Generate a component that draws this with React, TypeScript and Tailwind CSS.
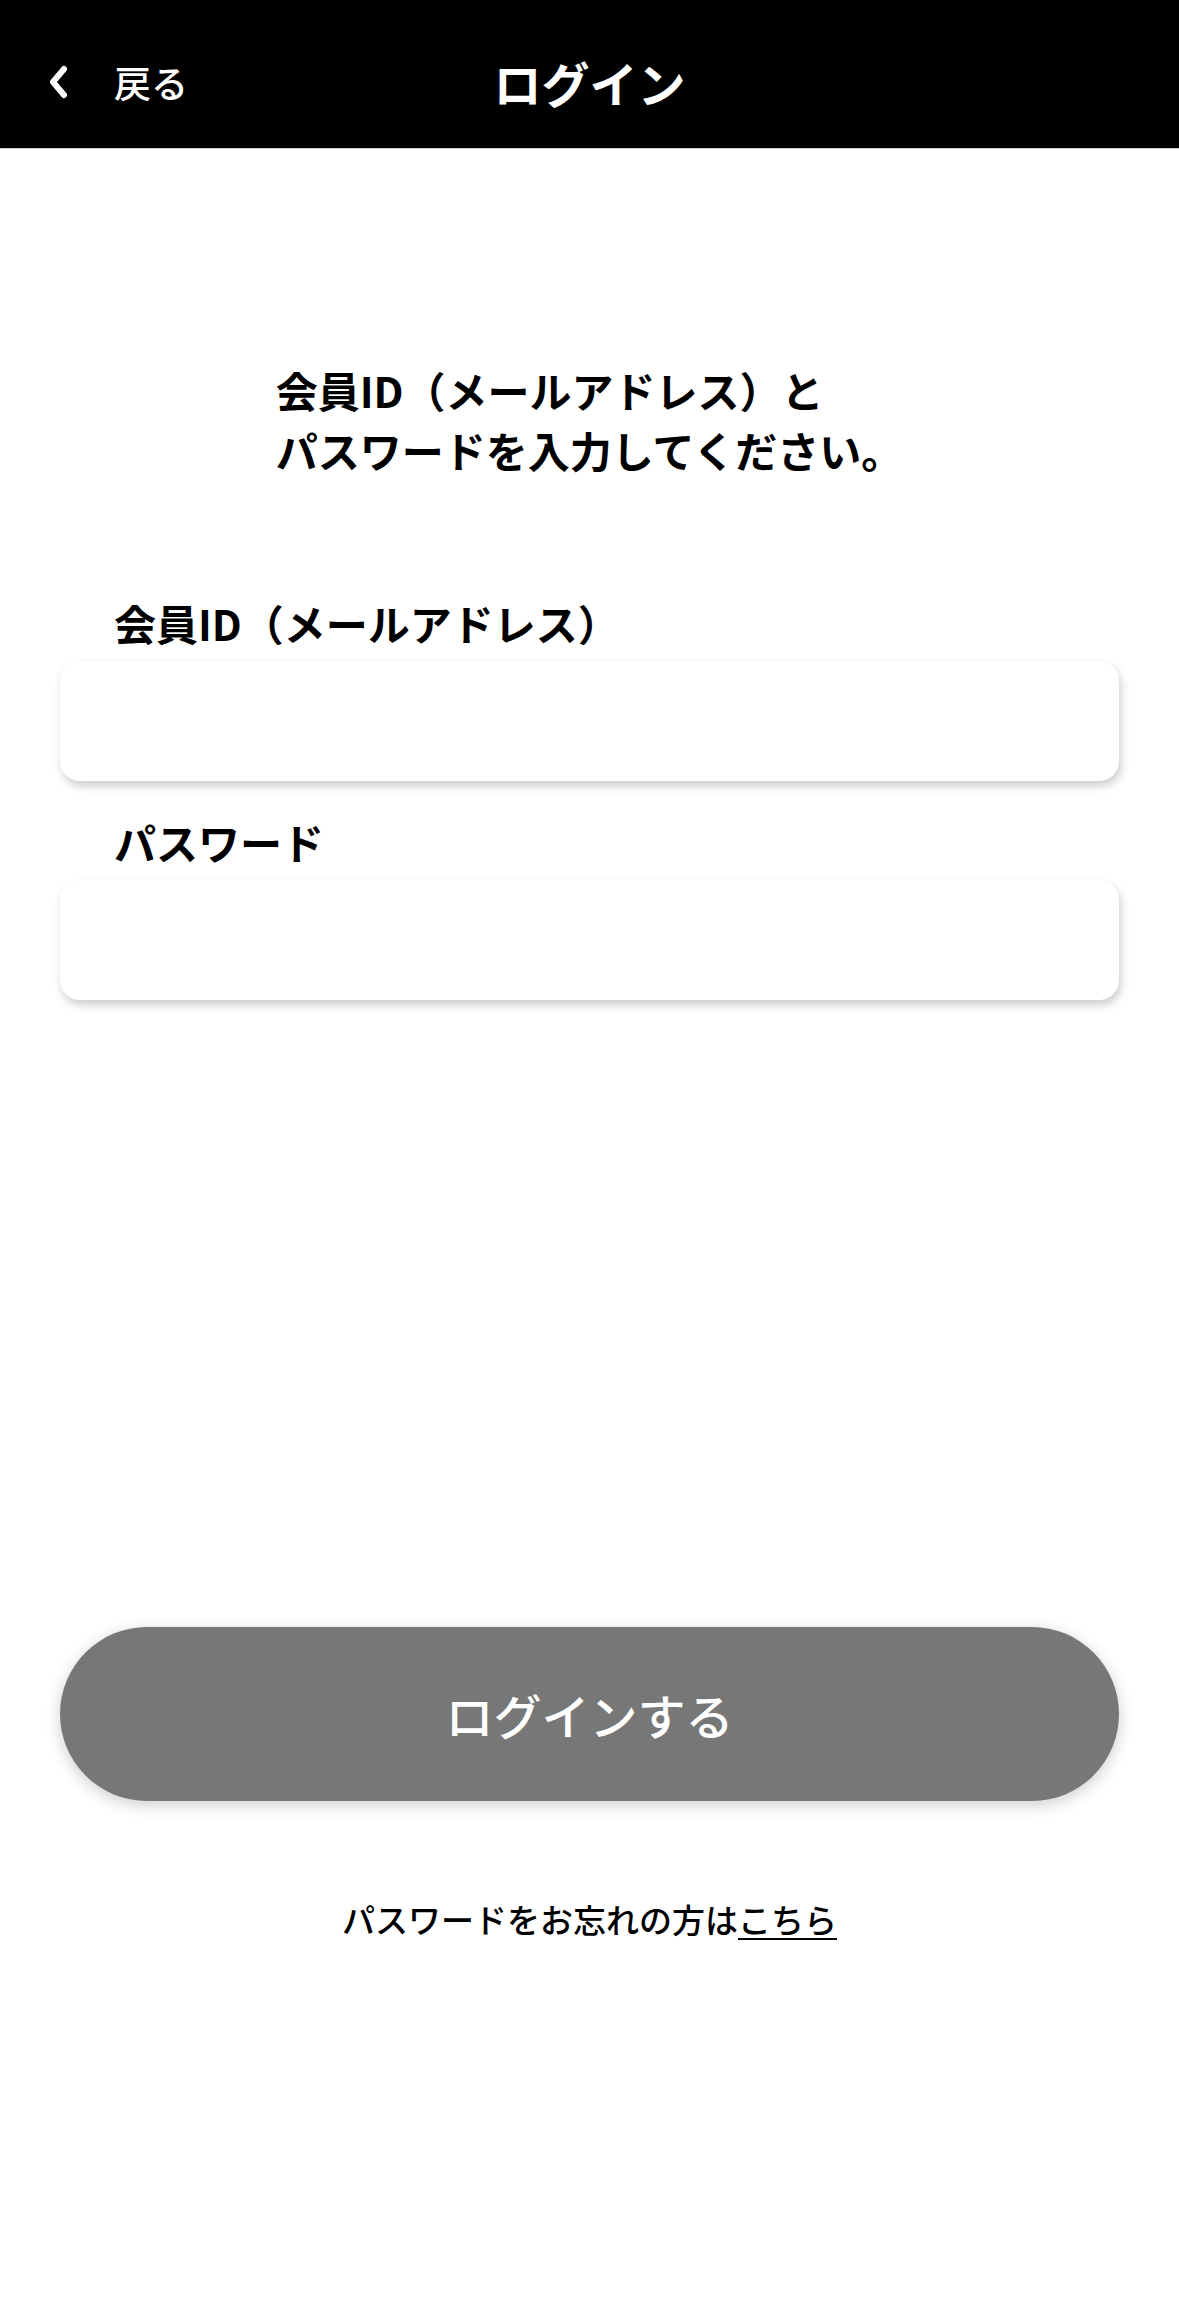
import { useState } from 'react';

function BackChevron() {
  return (
    <svg width="22" height="34" viewBox="0 0 22 34" fill="none" aria-hidden="true">
      <path d="M17 4 L6 17 L17 30" stroke="white" strokeWidth="6" strokeLinejoin="round" strokeLinecap="round" />
    </svg>
  );
}

export default function App() {
  const [memberId, setMemberId] = useState('');
  const [password, setPassword] = useState('');

  return (
    <div className="min-h-screen bg-white text-black font-['Noto_Sans_CJK_JP','Noto_Sans',sans-serif]">
      {/* Header */}
      <header className="h-[149px] bg-black border-b border-[#cfcfcf] grid grid-cols-[1fr_auto_1fr] items-center pt-[16px]">
        <button className="flex items-center gap-[45px] pl-[47px] text-white text-[37px] font-medium leading-none">
          <BackChevron />
          <span>戻る</span>
        </button>
        <h1 className="text-white text-[48px] font-bold leading-none">ログイン</h1>
        <div />
      </header>

      <main className="px-[60px] flex flex-col">
        {/* Instruction */}
        <div className="mt-[211px] flex justify-center">
          <p className="text-left text-[42px] leading-[60px] font-bold">
            会員ID（メールアドレス）と
            <br />
            パスワードを入力してください。
          </p>
        </div>

        {/* Member ID */}
        <label className="mt-[114px] pl-[54px] text-[42px] leading-[58px] font-bold">
          会員ID（メールアドレス）
        </label>
        <input
          type="email"
          value={memberId}
          onChange={(e) => setMemberId(e.target.value)}
          className="mt-[9px] h-[120px] w-full rounded-[20px] bg-white px-[30px] text-[40px] outline-none shadow-[2px_5px_10px_rgba(0,0,0,0.2)]"
        />

        {/* Password */}
        <label className="mt-[32px] pl-[54px] text-[42px] leading-[58px] font-bold">
          パスワード
        </label>
        <input
          type="password"
          value={password}
          onChange={(e) => setPassword(e.target.value)}
          className="mt-[9px] h-[120px] w-full rounded-[20px] bg-white px-[30px] text-[40px] outline-none shadow-[2px_5px_10px_rgba(0,0,0,0.2)]"
        />

        {/* Submit */}
        <button className="mt-[627px] h-[174px] w-full rounded-full bg-[#777777] text-white text-[48px] font-medium leading-none shadow-[0_4px_16px_rgba(0,0,0,0.2)] flex items-center justify-center">
          ログインする
        </button>

        {/* Forgot password */}
        <p className="mt-[94px] text-center text-[33px] font-medium leading-[48px]">
          パスワードをお忘れの方は
          <a href="#" className="underline underline-offset-[5px] decoration-[1.5px]">
            こちら
          </a>
        </p>
      </main>
    </div>
  );
}
